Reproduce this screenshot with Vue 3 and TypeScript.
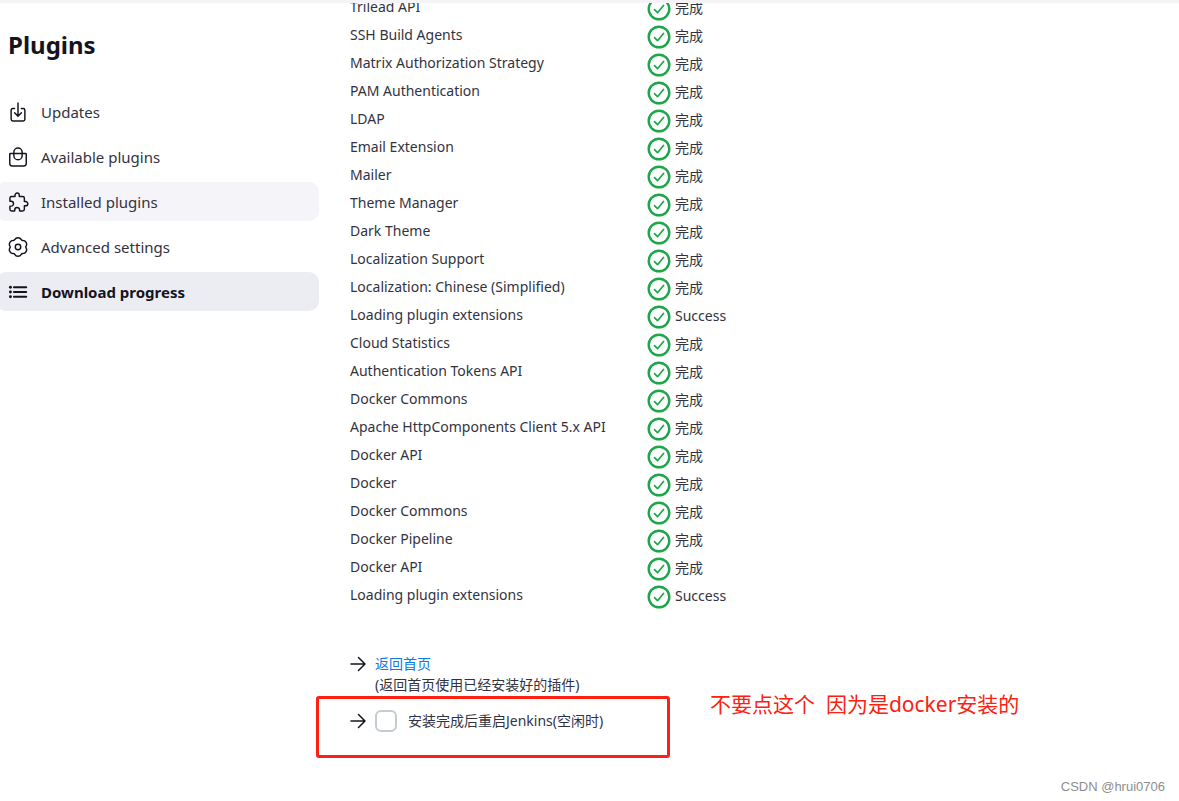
<script setup lang="ts">
import { ref } from 'vue'

interface Task {
  label: string
  icon: 'updates' | 'available' | 'installed' | 'settings' | 'progress'
  state?: 'hover' | 'active'
}

interface Job {
  name: string
  status: string
}

const tasks: Task[] = [
  { label: 'Updates', icon: 'updates' },
  { label: 'Available plugins', icon: 'available' },
  { label: 'Installed plugins', icon: 'installed', state: 'hover' },
  { label: 'Advanced settings', icon: 'settings' },
  { label: 'Download progress', icon: 'progress', state: 'active' },
]

const names: string[] = [
  'Trilead API',
  'SSH Build Agents',
  'Matrix Authorization Strategy',
  'PAM Authentication',
  'LDAP',
  'Email Extension',
  'Mailer',
  'Theme Manager',
  'Dark Theme',
  'Localization Support',
  'Localization: Chinese (Simplified)',
  'Loading plugin extensions',
  'Cloud Statistics',
  'Authentication Tokens API',
  'Docker Commons',
  'Apache HttpComponents Client 5.x API',
  'Docker API',
  'Docker',
  'Docker Commons',
  'Docker Pipeline',
  'Docker API',
  'Loading plugin extensions',
]

const jobs: Job[] = names.map((name) => ({
  name,
  status: name === 'Loading plugin extensions' ? 'Success' : '完成',
}))

const restart = ref(false)
</script>

<template>
  <div class="page">
    <div class="topbar"></div>
    <div class="body">
      <aside class="side">
        <h1>Plugins</h1>
        <nav class="tasks">
          <a v-for="t in tasks" :key="t.label" href="#" class="task" :class="t.state">
            <svg class="task-icon" viewBox="0 0 512 512" aria-hidden="true">
              <template v-if="t.icon === 'updates'">
                <path d="M336 176h40a40 40 0 0140 40v208a40 40 0 01-40 40H136a40 40 0 01-40-40V216a40 40 0 0140-40h40" />
                <path d="M176 272l80 80 80-80M256 48v288" />
              </template>
              <template v-else-if="t.icon === 'available'">
                <path d="M80 176a16 16 0 00-16 16v216c0 30.24 25.76 56 56 56h272c30.24 0 56-24.51 56-54.75V192a16 16 0 00-16-16z" />
                <path d="M160 176v-32a96 96 0 01192 0v32M160 176v48a96 96 0 00192 0v-48" />
              </template>
              <path
                v-else-if="t.icon === 'installed'"
                transform="translate(20 0)"
                d="M413.66 246.1H386a2 2 0 01-2-2v-77.24A38.86 38.86 0 00345.14 128H267.9a2 2 0 01-2-2V98.34c0-27.14-21.5-49.86-48.64-50.33a49.53 49.53 0 00-50.4 49.51V126a2 2 0 01-2 2H87.62A39.74 39.74 0 0048 167.62V238a2 2 0 002 2h26.91c29.37 0 53.68 25.48 54.09 54.85.42 29.87-23.51 57.15-53.29 57.15H50a2 2 0 00-2 2v70.38A39.74 39.74 0 0087.62 464H158a2 2 0 002-2v-20.93c0-30.28 24.75-56.35 55-57.06 30.1-.7 57 20.31 57 50.28V462a2 2 0 002 2h71.14A38.86 38.86 0 00384 425.14v-78a2 2 0 012-2h28.48c27.63 0 49.52-22.67 49.52-50.4s-23.2-48.64-50.34-48.64z"
              />
              <template v-else-if="t.icon === 'settings'">
                <path d="M179 82A90 90 0 01333 82Q342 107 368 102A90 90 0 01445 236Q428 256 445 276A90 90 0 01368 410Q342 405 333 430A90 90 0 01179 430Q170 405 144 410A90 90 0 0167 276Q84 256 67 236A90 90 0 01144 102Q170 107 179 82Z" />
                <circle cx="256" cy="256" r="64" />
              </template>
              <template v-else>
                <path class="thick" d="M160 144h288M160 256h288M160 368h288" />
                <g class="dots">
                  <circle cx="80" cy="144" r="34" />
                  <circle cx="80" cy="256" r="34" />
                  <circle cx="80" cy="368" r="34" />
                </g>
              </template>
            </svg>
            <span>{{ t.label }}</span>
          </a>
        </nav>
      </aside>

      <main class="main">
        <table class="jobs">
          <tbody>
            <tr v-for="(job, i) in jobs" :key="i">
              <th scope="row">{{ job.name }}</th>
              <td>
                <div class="status">
                  <svg viewBox="0 0 24 24" aria-hidden="true">
                    <circle cx="12" cy="12" r="10.3" />
                    <path d="M7.5 12.7l3 3 6-7.2" />
                  </svg>
                  <span>{{ job.status }}</span>
                </div>
              </td>
            </tr>
          </tbody>
        </table>

        <div class="step">
          <svg class="arrow" viewBox="0 0 16 16" aria-hidden="true"><path d="M1 8h14M8.5 1.5L15 8l-6.5 6.5" /></svg>
          <div>
            <a href="#" class="home">返回首页</a>
            <p>(返回首页使用已经安装好的插件)</p>
          </div>
        </div>

        <div class="restart-row">
          <div class="marked">
            <svg class="arrow" viewBox="0 0 16 16" aria-hidden="true"><path d="M1 8h14M8.5 1.5L15 8l-6.5 6.5" /></svg>
            <input id="restart" v-model="restart" type="checkbox" />
            <label for="restart">安装完成后重启Jenkins(空闲时)</label>
          </div>
          <p class="note">不要点这个&nbsp; 因为是docker安装的</p>
        </div>
        <footer>CSDN @hrui0706</footer>
      </main>
    </div>
  </div>
</template>

<style>
body {
  margin: 0;
  background: #fff;
}
</style>

<style scoped>
.page {
  min-height: 100vh;
  overflow: hidden;
  color: #333340;
  font-family: 'Noto Sans', 'Noto Sans CJK SC', sans-serif;
  font-size: 14px;
  line-height: 24px;
}
.topbar {
  height: 3px;
  background: #f4f4f7;
}
.body {
  display: grid;
  grid-template-columns: 319px minmax(0, 1fr);
  overflow: hidden;
}
h1 {
  margin: 25px 0 0 8px;
  color: #14141f;
  font-size: 24px;
  line-height: 34px;
}
.tasks {
  display: flex;
  flex-direction: column;
  gap: 6px;
  margin: 30px 0 0 -4px;
  font-size: 15px;
}
.task {
  display: flex;
  align-items: center;
  gap: 12px;
  height: 39px;
  padding-left: 11px;
  border-radius: 10px;
  color: inherit;
  text-decoration: none;
}
.hover {
  background: #f4f4f9;
}
.active {
  background: #ecedf3;
  color: #14141f;
  font-weight: 700;
}
.task-icon {
  width: 22px;
  height: 22px;
  fill: none;
  stroke: #14141f;
  stroke-width: 34;
  stroke-linecap: round;
  stroke-linejoin: round;
}
.thick {
  stroke-width: 44;
}
.dots {
  fill: #14141f;
  stroke: none;
}
.main {
  padding-left: 31px;
}
.jobs {
  width: 480px;
  margin-top: -8px;
  border-collapse: collapse;
}
.jobs th,
.jobs td {
  height: 28px;
  padding: 0;
  vertical-align: top;
  font-weight: 400;
  text-align: left;
}
.jobs th {
  width: 297px;
}
.status {
  display: flex;
  gap: 4px;
  line-height: 26px;
}
.status svg {
  width: 24px;
  height: 24px;
  margin-top: 2px;
  fill: none;
  stroke: #1ea64b;
  stroke-width: 2.4;
}
.status path {
  stroke-width: 1.7;
  stroke-linecap: round;
  stroke-linejoin: round;
}
.step {
  display: flex;
  gap: 9px;
  margin-top: 42px;
  line-height: 21px;
}
.step p {
  margin: 0;
}
.home {
  color: #0b7be8;
  text-decoration: none;
}
.arrow {
  flex: none;
  width: 16px;
  height: 22px;
  fill: none;
  stroke: #14141f;
  stroke-width: 1.5;
  stroke-linecap: round;
  stroke-linejoin: round;
}
.restart-row {
  display: flex;
  gap: 40px;
  margin: 1px 0 0 -34px;
}
.marked {
  display: flex;
  flex: 0 1 354px;
  align-items: flex-start;
  box-sizing: border-box;
  height: 62px;
  padding: 11px 0 0 31px;
  border: 3px solid #fb2113;
  border-radius: 3px;
  line-height: 22px;
}
.marked input {
  appearance: none;
  box-sizing: border-box;
  width: 22px;
  height: 22px;
  margin: 0 11px 0 9px;
  border: 2px solid #c3ccd1;
  border-radius: 6px;
  background: #fff;
}
.note {
  margin: -8px 0 0;
  color: #fb2113;
  font-size: 21px;
  line-height: 32px;
}
footer {
  padding: 21px 14px 0 0;
  color: #8e8e8e;
  font-family: 'Liberation Sans', Arial, sans-serif;
  font-size: 13px;
  line-height: 16px;
  text-align: right;
}
</style>
